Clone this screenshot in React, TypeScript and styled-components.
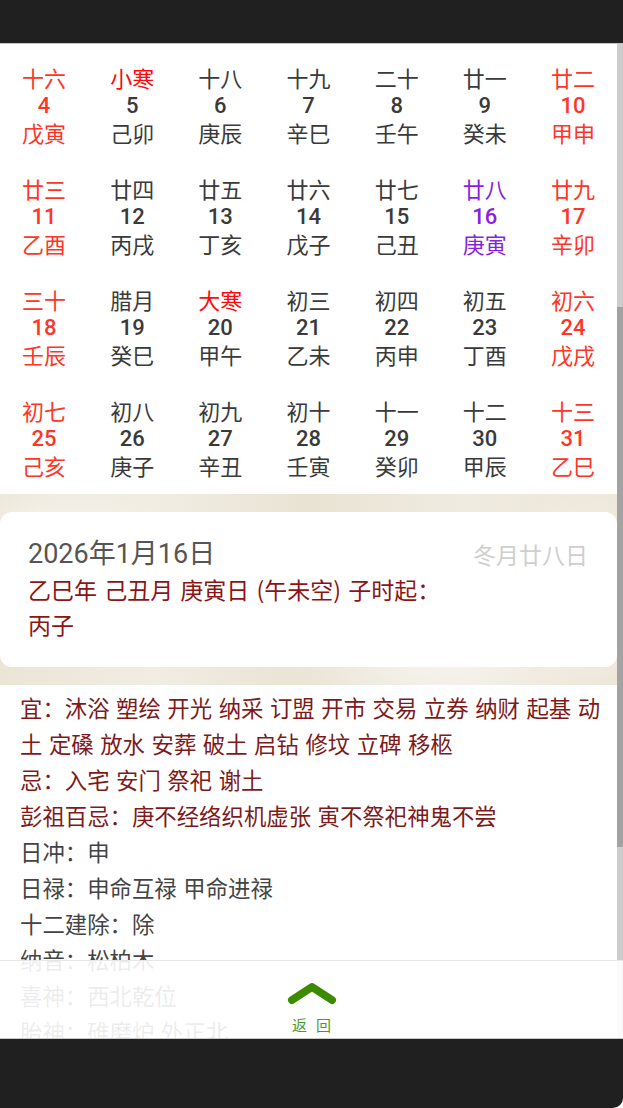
import React from "react";
import styled, { createGlobalStyle } from "styled-components";

const GlobalStyle = createGlobalStyle`
  html, body { margin: 0; padding: 0; }
  body {
    width: 623px;
    height: 1108px;
    overflow: hidden;
    background: #ffffff;
    font-family: "Noto Sans CJK SC", "Noto Sans", sans-serif;
  }
  * { box-sizing: border-box; }
`;

const Screen = styled.div`
  width: 623px;
  height: 1108px;
  display: flex;
  flex-direction: column;
  background: #fff;
`;

const StatusBar = styled.div`
  height: 44px;
  flex: none;
  background: #202020;
  border-bottom: 1px solid #c4c4c4;
`;

const Viewport = styled.div`
  position: relative;
  flex: 1;
  display: flex;
  overflow: hidden;
`;

const Content = styled.div`
  flex: 1;
  display: flex;
  flex-direction: column;
  min-width: 0;
`;

const ScrollTrack = styled.div`
  width: 6px;
  flex: none;
  background: #cdcdcd;
  display: flex;
  flex-direction: column;
`;

const ScrollThumb = styled.div`
  margin-top: 263px;
  height: 540px;
  background: #a3a3a3;
`;

const CalendarGrid = styled.div`
  display: grid;
  grid-template-columns: repeat(7, 1fr);
  row-gap: 30px;
  padding: 20px 0 16px;
  background: #fff;
`;

type Tone = "normal" | "weekend" | "today";

const toneColor = (t: Tone) =>
  t === "weekend" ? "#ff3527" : t === "today" ? "#8a1fe0" : "#3a3a3a";

const DayCell = styled.div`
  display: flex;
  flex-direction: column;
  align-items: center;
  height: 81px;
`;

const LunarText = styled.div<{ $color: string }>`
  font-size: 22px;
  line-height: 27px;
  height: 27px;
  color: ${(p) => p.$color};
`;

const DayNumber = styled.div<{ $color: string }>`
  font-family: Roboto, "Noto Sans", sans-serif;
  font-weight: 500;
  font-size: 22px;
  line-height: 29px;
  height: 29px;
  color: ${(p) => p.$color};
`;

const GanZhi = styled.div<{ $color: string }>`
  font-size: 22px;
  line-height: 25px;
  height: 25px;
  color: ${(p) => p.$color};
`;

const InfoBand = styled.div`
  padding: 18px 0;
  background:
    radial-gradient(ellipse 120px 60px at 8% 20%, rgba(255, 255, 255, 0.5), transparent),
    radial-gradient(ellipse 160px 80px at 70% 85%, rgba(255, 255, 255, 0.45), transparent),
    radial-gradient(ellipse 90px 120px at 97% 50%, rgba(255, 255, 255, 0.4), transparent),
    linear-gradient(90deg, #ebe5d6 0%, #f1ede3 25%, #e9e3d3 50%, #f0ebe1 75%, #ece6d7 100%);
`;

const InfoCard = styled.div`
  background: #fff;
  border-radius: 12px;
  padding: 25px 29px 25px 28px;
  display: flex;
  justify-content: space-between;
  align-items: flex-start;
`;

const CardMain = styled.div`
  width: 420px;
  display: flex;
  flex-direction: column;
`;

const SolarDate = styled.div`
  font-family: Roboto, "Noto Sans CJK SC", sans-serif;
  font-size: 27px;
  line-height: 35px;
  color: #555;
`;

const GanZhiLine = styled.div`
  font-size: 23px;
  line-height: 35px;
  word-spacing: 2px;
  color: #8b1414;
`;

const LunarDate = styled.div`
  font-size: 23px;
  line-height: 35px;
  color: #cfcfcf;
  white-space: nowrap;
`;

const DetailList = styled.div`
  padding: 4px 8px 0 20px;
  background: #fff;
  display: flex;
  flex-direction: column;
`;

const DetailLine = styled.div<{ $accent?: boolean }>`
  font-size: 22.4px;
  line-height: 36px;
  word-spacing: 1.5px;
  color: ${(p) => (p.$accent ? "#7e1a1a" : "#444")};
`;

const BottomNav = styled.div`
  position: absolute;
  left: 0;
  right: 0;
  bottom: 0;
  height: 78px;
  background: rgba(255, 255, 255, 0.9);
  border-top: 1px solid #e6e6e6;
  display: flex;
  flex-direction: column;
  align-items: center;
  padding-top: 20px;
`;

const BackLabel = styled.div`
  margin-top: 11px;
  font-size: 15px;
  line-height: 18px;
  letter-spacing: 9px;
  padding-left: 9px;
  color: #4b9a1f;
`;

const NavBar = styled.div`
  height: 70px;
  flex: none;
  background: #202020;
  border-top: 1px solid #c8c8c8;
  border-bottom-right-radius: 10px;
`;

type Day = { lunar: string; num: number; gz: string; tone?: Tone; term?: boolean };

const rows: Day[][] = [
  [
    { lunar: "十六", num: 4, gz: "戊寅", tone: "weekend" },
    { lunar: "小寒", num: 5, gz: "己卯", term: true },
    { lunar: "十八", num: 6, gz: "庚辰" },
    { lunar: "十九", num: 7, gz: "辛巳" },
    { lunar: "二十", num: 8, gz: "壬午" },
    { lunar: "廿一", num: 9, gz: "癸未" },
    { lunar: "廿二", num: 10, gz: "甲申", tone: "weekend" },
  ],
  [
    { lunar: "廿三", num: 11, gz: "乙酉", tone: "weekend" },
    { lunar: "廿四", num: 12, gz: "丙戌" },
    { lunar: "廿五", num: 13, gz: "丁亥" },
    { lunar: "廿六", num: 14, gz: "戊子" },
    { lunar: "廿七", num: 15, gz: "己丑" },
    { lunar: "廿八", num: 16, gz: "庚寅", tone: "today" },
    { lunar: "廿九", num: 17, gz: "辛卯", tone: "weekend" },
  ],
  [
    { lunar: "三十", num: 18, gz: "壬辰", tone: "weekend" },
    { lunar: "腊月", num: 19, gz: "癸巳" },
    { lunar: "大寒", num: 20, gz: "甲午", term: true },
    { lunar: "初三", num: 21, gz: "乙未" },
    { lunar: "初四", num: 22, gz: "丙申" },
    { lunar: "初五", num: 23, gz: "丁酉" },
    { lunar: "初六", num: 24, gz: "戊戌", tone: "weekend" },
  ],
  [
    { lunar: "初七", num: 25, gz: "己亥", tone: "weekend" },
    { lunar: "初八", num: 26, gz: "庚子" },
    { lunar: "初九", num: 27, gz: "辛丑" },
    { lunar: "初十", num: 28, gz: "壬寅" },
    { lunar: "十一", num: 29, gz: "癸卯" },
    { lunar: "十二", num: 30, gz: "甲辰" },
    { lunar: "十三", num: 31, gz: "乙巳", tone: "weekend" },
  ],
];

const details: { text: string; accent?: boolean }[] = [
  { text: "宜：沐浴 塑绘 开光 纳采 订盟 开市 交易 立券 纳财 起基 动土 定磉 放水 安葬 破土 启钻 修坟 立碑 移柩", accent: true },
  { text: "忌：入宅 安门 祭祀 谢土", accent: true },
  { text: "彭祖百忌：庚不经络织机虚张 寅不祭祀神鬼不尝", accent: true },
  { text: "日冲：申" },
  { text: "日禄：申命互禄 甲命进禄" },
  { text: "十二建除：除" },
  { text: "纳音：松柏木" },
  { text: "喜神：西北乾位" },
  { text: "胎神：碓磨炉 外正北" },
];

const Chevron = () => (
  <svg width="50" height="24" viewBox="0 0 50 24">
    <path
      d="M5 19 L25 6 L45 19"
      fill="none"
      stroke="#3b8a00"
      strokeWidth="8"
      strokeLinecap="round"
      strokeLinejoin="round"
    />
  </svg>
);

export default function App() {
  return (
    <>
      <GlobalStyle />
      <Screen>
        <StatusBar />
        <Viewport>
          <Content>
            <CalendarGrid>
              {rows.flat().map((d) => {
                const base = toneColor(d.tone ?? "normal");
                return (
                  <DayCell key={d.num}>
                    <LunarText $color={d.term ? "#ff0a0a" : base}>{d.lunar}</LunarText>
                    <DayNumber $color={base}>{d.num}</DayNumber>
                    <GanZhi $color={base}>{d.gz}</GanZhi>
                  </DayCell>
                );
              })}
            </CalendarGrid>
            <InfoBand>
              <InfoCard>
                <CardMain>
                  <SolarDate>2026年1月16日</SolarDate>
                  <GanZhiLine>乙巳年 己丑月 庚寅日 (午未空) 子时起：丙子</GanZhiLine>
                </CardMain>
                <LunarDate>冬月廿八日</LunarDate>
              </InfoCard>
            </InfoBand>
            <DetailList>
              {details.map((d) => (
                <DetailLine key={d.text} $accent={d.accent}>
                  {d.text}
                </DetailLine>
              ))}
            </DetailList>
          </Content>
          <ScrollTrack>
            <ScrollThumb />
          </ScrollTrack>
          <BottomNav>
            <Chevron />
            <BackLabel>返回</BackLabel>
          </BottomNav>
        </Viewport>
        <NavBar />
      </Screen>
    </>
  );
}
